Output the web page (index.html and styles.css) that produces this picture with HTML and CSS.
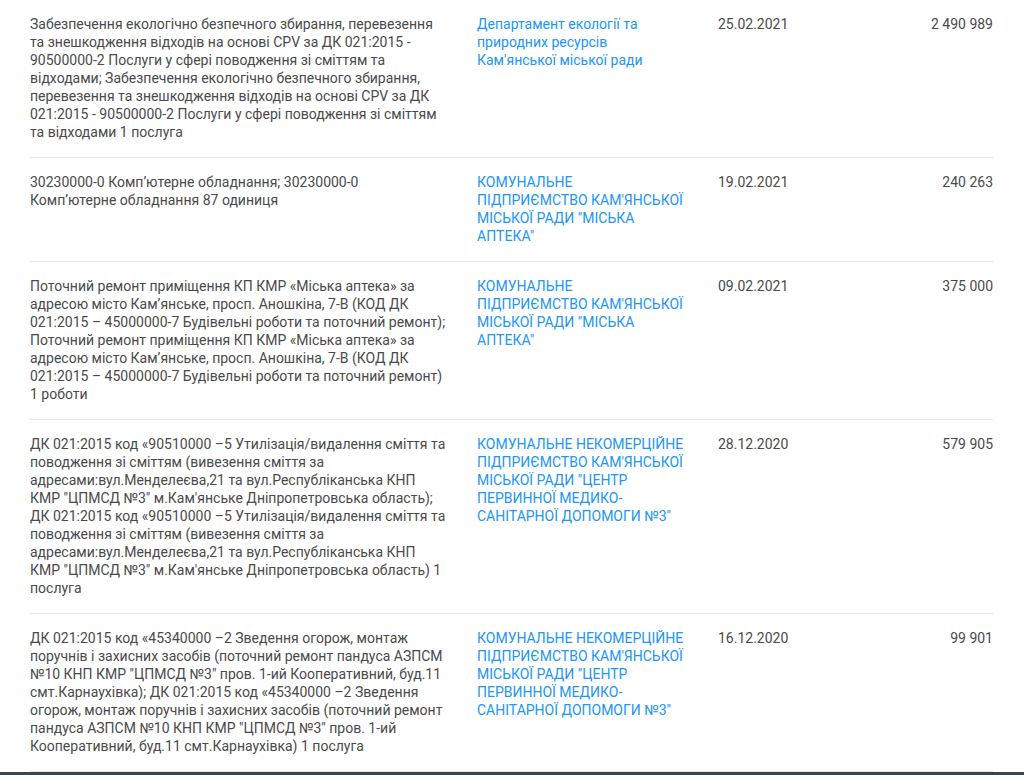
FILE: index.html
```html
<!DOCTYPE html>
<html lang="uk">
<head>
  <meta charset="UTF-8">
  <meta name="viewport" content="width=device-width, initial-scale=1.0">
  <title>Закупівлі</title>
  <link rel="stylesheet" href="styles.css">
</head>
<body>
  <div class="top-shadow"></div>
  <div class="tenders">
    <div class="tender-row">
      <div class="tender-title">Забезпечення екологічно безпечного збирання, перевезення та знешкодження відходів на основі CPV за ДК 021:2015 - 90500000-2 Послуги у сфері поводження зі сміттям та відходами; Забезпечення екологічно безпечного збирання, перевезення та знешкодження відходів на основі CPV за ДК 021:2015 - 90500000-2 Послуги у сфері поводження зі сміттям та відходами 1 послуга</div>
      <a class="tender-org" href="#">Департамент екології та природних ресурсів Кам'янської міської ради</a>
      <div class="tender-date">25.02.2021</div>
      <div class="tender-sum">2 490 989</div>
    </div>
    <div class="tender-row">
      <div class="tender-title">30230000-0 Комп’ютерне обладнання; 30230000-0 Комп’ютерне обладнання 87 одиниця</div>
      <a class="tender-org" href="#">КОМУНАЛЬНЕ ПІДПРИЄМСТВО КАМ'ЯНСЬКОЇ МІСЬКОЇ РАДИ "МІСЬКА АПТЕКА"</a>
      <div class="tender-date">19.02.2021</div>
      <div class="tender-sum">240 263</div>
    </div>
    <div class="tender-row">
      <div class="tender-title">Поточний ремонт приміщення КП КМР «Міська аптека» за адресою місто Кам’янське, просп. Аношкіна, 7-В (КОД ДК 021:2015 – 45000000-7 Будівельні роботи та поточний ремонт); Поточний ремонт приміщення КП КМР «Міська аптека» за адресою місто Кам’янське, просп. Аношкіна, 7-В (КОД ДК 021:2015 – 45000000-7 Будівельні роботи та поточний ремонт) 1 роботи</div>
      <a class="tender-org" href="#">КОМУНАЛЬНЕ ПІДПРИЄМСТВО КАМ'ЯНСЬКОЇ МІСЬКОЇ РАДИ "МІСЬКА АПТЕКА"</a>
      <div class="tender-date">09.02.2021</div>
      <div class="tender-sum">375 000</div>
    </div>
    <div class="tender-row">
      <div class="tender-title">ДК 021:2015 код «90510000 –5 Утилізація/видалення сміття та поводження зі сміттям (вивезення сміття за адресами:вул.Менделеєва,21 та вул.Республіканська КНП КМР "ЦПМСД №3" м.Кам'янське Дніпропетровська область); ДК 021:2015 код «90510000 –5 Утилізація/видалення сміття та поводження зі сміттям (вивезення сміття за адресами:вул.Менделеєва,21 та вул.Республіканська КНП КМР "ЦПМСД №3" м.Кам'янське Дніпропетровська область) 1 послуга</div>
      <a class="tender-org" href="#">КОМУНАЛЬНЕ НЕКОМЕРЦІЙНЕ ПІДПРИЄМСТВО КАМ'ЯНСЬКОЇ МІСЬКОЇ РАДИ "ЦЕНТР ПЕРВИННОЇ МЕДИКО-САНІТАРНОЇ ДОПОМОГИ №3"</a>
      <div class="tender-date">28.12.2020</div>
      <div class="tender-sum">579 905</div>
    </div>
    <div class="tender-row">
      <div class="tender-title">ДК 021:2015 код «45340000 –2 Зведення огорож, монтаж поручнів і захисних засобів (поточний ремонт пандуса АЗПСМ №10 КНП КМР "ЦПМСД №3" пров. 1-ий Кооперативний, буд.11 смт.Карнаухівка); ДК 021:2015 код «45340000 –2 Зведення огорож, монтаж поручнів і захисних засобів (поточний ремонт пандуса АЗПСМ №10 КНП КМР "ЦПМСД №3" пров. 1-ий Кооперативний, буд.11 смт.Карнаухівка) 1 послуга</div>
      <a class="tender-org" href="#">КОМУНАЛЬНЕ НЕКОМЕРЦІЙНЕ ПІДПРИЄМСТВО КАМ'ЯНСЬКОЇ МІСЬКОЇ РАДИ "ЦЕНТР ПЕРВИННОЇ МЕДИКО-САНІТАРНОЇ ДОПОМОГИ №3"</a>
      <div class="tender-date">16.12.2020</div>
      <div class="tender-sum">99 901</div>
    </div>
  </div>
  <div class="footer"></div>
</body>
</html>
```

FILE: styles.css
```css
body {
  margin: 0;
  font-family: Roboto, 'Liberation Sans', Arial, sans-serif;
  font-size: 14px;
  line-height: 18px;
  color: #4a4a4a;
  background-color: #fff;
}
.top-shadow {
  height: 0;
  box-shadow: 0 1px 8px rgba(0, 0, 0, 0.18);
}
.tenders {
  padding: 0 31px 0 30px;
}
.tender-row {
  display: grid;
  grid-template-columns: 417px 208px 1fr auto;
  column-gap: 30px;
  padding: 15px 0 16px;
  border-bottom: 1px solid #e6e6e6;
}
.tender-org {
  color: #2196f3;
  text-decoration: none;
}
.tender-date {
  padding-left: 3px;
}
.tender-sum {
  text-align: right;
}
.footer {
  height: 60px;
  background-color: #37474f;
}
```
